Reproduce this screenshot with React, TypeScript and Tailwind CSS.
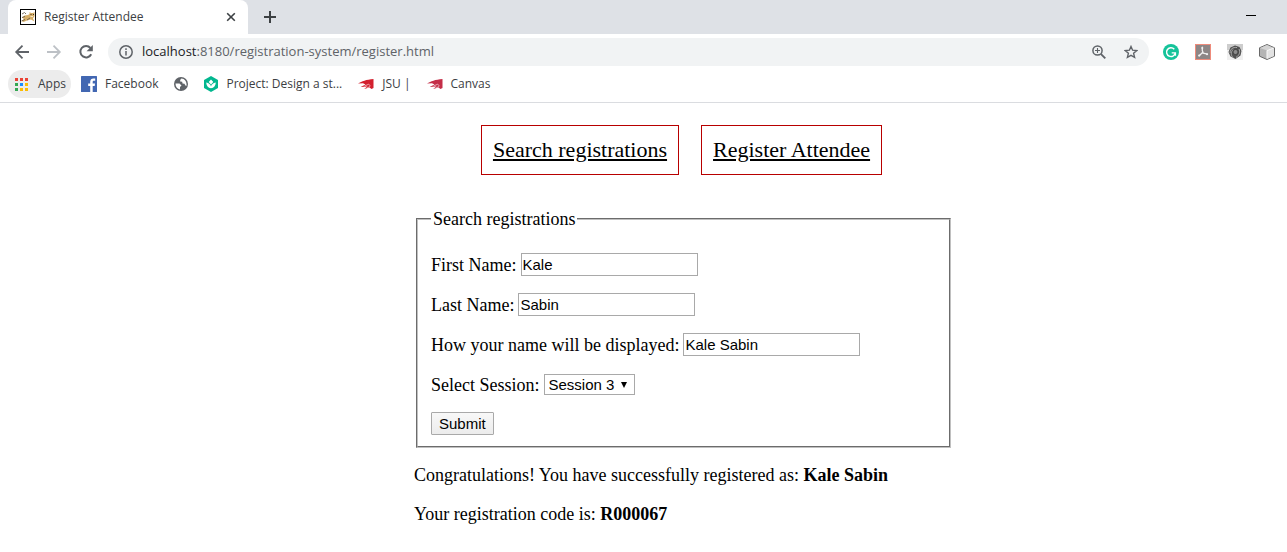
import { useId, type ReactNode } from "react";

const BLUE = "#4267b2";

function CatIcon() {
  return (
    <svg width="16" height="16" viewBox="0 0 16 16" aria-hidden="true">
      <rect x="0.5" y="0.5" width="15" height="15" fill="#fff" stroke="#000" />
      <path d="M1.500 12 4 10 2 8.500 4.500 6.500 8 6 9.500 5 9.500 3 11 4 13 4 14.500 3 14.500 7 13 9.500 14.500 12.500 11 10.500 7 11.500 3.500 13z" fill="#d6ae68" />
      <path d="M2 5 4.500 3.500M4.500 3.500 6 5M2 8.500 5 7.500M1.500 12 5 10.500M7 11 10 9" fill="none" stroke="#5d5140" strokeWidth="0.8" />
      <path d="M10.500 5.500h1M13 5.500h1" stroke="#4b3a21" />
      <path d="M10.500 7h2.500v1h-2.500z" fill="#f6eacb" />
    </svg>
  );
}

function CloseIcon() {
  return (
    <svg width="10" height="10" viewBox="0 0 10 10" aria-hidden="true">
      <path d="M1.200 1.200l7.600 7.600M8.800 1.200 1.200 8.800" stroke="#3c4043" strokeWidth="1.6" />
    </svg>
  );
}

function PlusIcon() {
  return (
    <svg width="12" height="12" viewBox="0 0 12 12" aria-hidden="true">
      <path d="M6 0v12M0 6h12" stroke="#3c4043" strokeWidth="2" />
    </svg>
  );
}

function ArrowIcon() {
  return (
    <svg width="16" height="16" viewBox="0 0 16 16" fill="none" stroke="currentColor" strokeWidth="1.8" aria-hidden="true">
      <path d="M15 8H2.500M8.500 1.700 2.200 8l6.300 6.300" />
    </svg>
  );
}

function ReloadIcon() {
  return (
    <svg width="16" height="16" viewBox="0 0 16 16" aria-hidden="true">
      <path d="M13.200 10.200A5.700 5.700 0 1 1 12.400 4" fill="none" stroke="#5f6368" strokeWidth="2" />
      <path d="M14.800 1v6.200H8.600z" fill="#5f6368" />
    </svg>
  );
}

function InfoIcon() {
  return (
    <svg width="14" height="14" viewBox="0 0 14 14" aria-hidden="true">
      <circle cx="7" cy="7" r="6.2" fill="none" stroke="#5f6368" strokeWidth="1.5" />
      <path d="M7 6v4.500M7 3.300v1.600" stroke="#5f6368" strokeWidth="1.5" />
    </svg>
  );
}

function ZoomIcon() {
  return (
    <svg width="14" height="14" viewBox="0 0 14 14" fill="none" stroke="#5f6368" aria-hidden="true">
      <circle cx="5.5" cy="5.5" r="4.6" strokeWidth="1.5" />
      <path d="M3 5.500h5M5.500 3v5" strokeWidth="1.1" />
      <path d="M8.800 8.800 13.300 13.300" strokeWidth="1.9" />
    </svg>
  );
}

function StarIcon() {
  return (
    <svg width="14" height="14" viewBox="0 0 14 14" aria-hidden="true">
      <path d="M7 1.500 8.600 5.200 12.800 5.600 9.600 8.300 10.600 12.400 7 10.300 3.400 12.400 4.400 8.300 1.200 5.600 5.400 5.200z" fill="none" stroke="#5f6368" strokeWidth="1.4" />
    </svg>
  );
}

function GrammarIcon() {
  return (
    <svg width="16" height="16" viewBox="0 0 16 16" aria-hidden="true">
      <circle cx="8" cy="8" r="8" fill="#15c39a" />
      <path d="M11.300 5.200A4.400 4.400 0 1 0 12.300 9M8.700 8.900h3.700v2.800" fill="none" stroke="#fff" strokeWidth="1.4" />
    </svg>
  );
}

function PdfIcon() {
  return (
    <svg width="16" height="16" viewBox="0 0 16 16" aria-hidden="true">
      <rect x="0.5" y="0.5" width="15" height="15" fill="#8d8686" stroke="#ee8b7b" />
      <path d="M7.300 3.200V6.500L8.200 9M7.800 8.200 4.200 11.800M8 9.200 12.500 10.200" fill="none" stroke="#f1f1f1" strokeWidth="1.3" strokeLinecap="round" />
      <circle cx="4.200" cy="11.500" r="1.100" fill="#f1f1f1" />
      <circle cx="7.300" cy="4" r="1" fill="#f1f1f1" />
      <circle cx="12" cy="10.200" r="1" fill="#f1f1f1" />
    </svg>
  );
}

function KnotIcon() {
  return (
    <svg width="16" height="16" viewBox="0 0 16 16" aria-hidden="true">
      <rect width="16" height="16" fill="#f0f0f0" />
      <path d="M0 0h16v6H0z" fill="#cdcdcd" />
      <path d="M8 1.500 12.500 3 14.500 7 13.500 11.500 8.500 15 3.500 12.500 1.500 8 3.500 3.500z" fill="#505050" />
      <path d="M3 9C3 5 6 3 10 3.500M6 13.500C3.500 11 4 8 6 5.500M12 5c1.500 3 .5 6-3 8.500" fill="none" stroke="#b5b5b5" strokeWidth="0.9" />
      <circle cx="8.500" cy="8" r="2.500" fill="#8b8b8b" stroke="#3a3a3a" strokeWidth="0.8" />
    </svg>
  );
}

function CubeIcon() {
  return (
    <svg width="16" height="16" viewBox="0 0 16 16" aria-hidden="true">
      <path d="M8 .5 15.500 3.800V12.200L8 15.500.5 12.200V3.800z" fill="#b4b4b4" stroke="#696969" />
      <path d="M1 4 8 1l7 3L8 6.600z" fill="#d4d4d4" />
      <path d="M8 6.600 15 4v8L8 15z" fill="#e2e2e2" />
      <path d="M8 6.600v8M8 6.600 14.500 4.200" stroke="#f8f8f8" />
    </svg>
  );
}

function AppsIcon() {
  const colours = ["#ea4335", "#ea4335", "#ea4335", "#34a853", "#1a8cff", "#fbbc04", "#34a853", "#fbbc04", "#fbbc04"];
  return (
    <svg width="13" height="13" viewBox="0 0 13 13" aria-hidden="true">
      {colours.map((fill, i) => (
        <rect key={i} x={(i % 3) * 5} y={Math.floor(i / 3) * 5} width="3" height="3" fill={fill} />
      ))}
    </svg>
  );
}

function FacebookIcon() {
  return (
    <svg width="16" height="16" viewBox="0 0 16 16" aria-hidden="true">
      <rect width="16" height="16" rx="0.5" fill={BLUE} />
      <path d="M9.200 16V10H7.200V7.600h2V5.800c0-2.100 1.300-3.300 3.200-3.300.9 0 1.600.1 1.800.1v2.200H13c-1 0-1.300.5-1.300 1.300v1.500H14L13.700 10h-2v6z" fill="#fff" />
    </svg>
  );
}

function GlobeIcon() {
  return (
    <svg width="14" height="14" viewBox="0 0 14 14" aria-hidden="true">
      <circle cx="7" cy="7" r="7" fill="#5f6368" />
      <path d="M1.500 6.500H5.500L7.500 8.500 6 10v2.400C3.200 12 1.500 9.500 1.500 6.500zM7.500 1.600C6.500 2.500 6 3 6.200 4.500l2 .3L8.500 6.500l2 .3.8 1.700 1.300.2C12.900 4.500 10.500 1.700 7.500 1.600z" fill="#fff" />
    </svg>
  );
}

function LotusIcon() {
  return (
    <svg width="14" height="16" viewBox="0 0 14 16" aria-hidden="true">
      <path d="M7 0 14 4v8l-7 4-7-4V4z" fill="#02b78f" />
      <path d="M7 3.500 9.300 6 7 8.500 4.700 6zM2.200 6.500C5 7 6.500 8.500 7 10.500 7.500 8.500 9 7 11.800 6.500 11.600 10 10 12 7 12.200 4 12 2.400 10 2.200 6.500z" fill="#fff" />
    </svg>
  );
}

function FlameIcon({ colour }: { colour: string }) {
  return (
    <svg width="16" height="10" viewBox="0 0 16 10" aria-hidden="true">
      <path d="M0 4.500C4 2.500 8 .5 15.500 0V9L13.500 10 11.500 8.500 6 10 9.500 7.500 2.500 8 7.500 5.500 5 4.300z" fill={colour} />
      <path d="M6.500 7 10.500 5.300 12.500 6.800M9 9 12 7.500" fill="none" stroke="#fff" strokeWidth="0.6" />
    </svg>
  );
}

function Bookmark({ icon, children, label }: { icon: ReactNode; children?: ReactNode; label?: string }) {
  return (
    <a href="#" aria-label={label} className="flex items-center gap-2 whitespace-nowrap">
      {icon}
      {children}
    </a>
  );
}

function Field({ label, value }: { label: string; value: string }) {
  const id = useId();
  return (
    <div className="flex items-center gap-1">
      <label htmlFor={id}>{label}</label>
      <input
        id={id}
        type="text"
        defaultValue={value}
        className="h-[23px] w-[177px] border border-[#a9a9a9] bg-white px-px font-['Liberation_Sans',Arial,sans-serif] text-[15px] leading-[18px]"
      />
    </div>
  );
}

function NavLink({ children }: { children: ReactNode }) {
  return (
    <a href="#" className="border border-[#b80000] px-[11px] py-3 text-[22px] leading-6 underline decoration-2 underline-offset-2">
      {children}
    </a>
  );
}

function BrowserBar() {
  return (
    <header className="border-b border-[#dadce0] font-['Open_Sans','Segoe_UI',sans-serif] text-xs text-[#3c4043]">
      <div className="flex h-[34px] items-stretch bg-[#dee1e6] pl-2">
        <div className="flex w-60 items-center rounded-t-lg bg-white px-3">
          <CatIcon />
          <span className="ml-2 flex-1">Register Attendee</span>
          <button type="button" aria-label="Close tab">
            <CloseIcon />
          </button>
        </div>
        <button type="button" aria-label="New tab" className="ml-4">
          <PlusIcon />
        </button>
        <button type="button" aria-label="Minimize" className="mr-[31px] mb-1 ml-auto flex items-center">
          <span className="h-px w-2.5 bg-black" />
        </button>
      </div>
      <div className="flex h-9 items-center pr-3 pl-3.5">
        <div className="flex gap-4">
          <button type="button" aria-label="Back" className="text-[#5f6368]">
            <ArrowIcon />
          </button>
          <button type="button" aria-label="Forward" className="rotate-180 text-[#bdc1c6]">
            <ArrowIcon />
          </button>
          <button type="button" aria-label="Reload">
            <ReloadIcon />
          </button>
        </div>
        <div className="ml-3.5 flex h-7 flex-1 items-center rounded-full bg-[#f1f3f4] px-[11px]">
          <InfoIcon />
          <span className="ml-[9px] flex-1 text-[13px] text-[#5f6368]">
            <span className="text-[#202124]">localhost</span>:8180/registration-system/register.html
          </span>
          <button type="button" aria-label="Zoom">
            <ZoomIcon />
          </button>
          <button type="button" aria-label="Bookmark this page" className="ml-[18px]">
            <StarIcon />
          </button>
        </div>
        <div className="ml-3.5 flex gap-4">
          <GrammarIcon />
          <PdfIcon />
          <KnotIcon />
          <CubeIcon />
        </div>
      </div>
      <nav aria-label="Bookmarks" className="flex h-8 items-center pb-1 pl-2">
        <a href="#" className="flex h-7 items-center gap-2.5 rounded-full bg-[#ececec] pr-[5px] pl-[7px]">
          <AppsIcon />
          Apps
        </a>
        <div className="ml-2.5 flex items-center gap-4">
          <Bookmark icon={<FacebookIcon />}>Facebook</Bookmark>
          <Bookmark icon={<GlobeIcon />} label="Web page" />
          <Bookmark icon={<LotusIcon />}>Project: Design a st...</Bookmark>
          <Bookmark icon={<FlameIcon colour="#d3202e" />}>JSU |</Bookmark>
          <Bookmark icon={<FlameIcon colour="#c42e48" />}>Canvas</Bookmark>
        </div>
      </nav>
    </header>
  );
}

export default function App() {
  return (
    <div className="bg-white">
      <BrowserBar />
      <main className="pt-[22px] pl-20 font-['Liberation_Serif','Times_New_Roman',serif] text-lg leading-5 text-black">
        <nav aria-label="Pages" className="flex justify-center gap-[22px] pr-1">
          <NavLink>Search registrations</NavLink>
          <NavLink>Register Attendee</NavLink>
        </nav>
        <div className="mx-auto mt-[34px] max-w-[539px]">
          <form onSubmit={(e) => e.preventDefault()}>
            <fieldset className="mx-0.5 border-2 border-[#c0c0c0] [border-style:groove] px-[13px] pb-[11px]">
              <legend className="px-0.5">Search registrations</legend>
              <div className="flex flex-col items-start gap-[17px] pt-6">
                <Field label="First Name:" value="Kale" />
                <Field label="Last Name:" value="Sabin" />
                <Field label="How your name will be displayed:" value="Kale Sabin" />
                <div className="flex items-center gap-1 pt-px">
                  <label htmlFor="session">Select Session:</label>
                  <span className="grid items-center">
                    <select
                      id="session"
                      defaultValue="3"
                      className="col-start-1 row-start-1 h-[21px] w-[91px] appearance-none border border-[#a9a9a9] bg-white px-1 font-['Liberation_Sans',Arial,sans-serif] text-[15px] leading-[18px]"
                    >
                      <option value="1">Session 1</option>
                      <option value="2">Session 2</option>
                      <option value="3">Session 3</option>
                    </select>
                    <svg width="6" height="6" viewBox="0 0 6 6" aria-hidden="true" className="pointer-events-none col-start-1 row-start-1 mr-2 justify-self-end">
                      <path d="M0 0h6L3 6z" />
                    </svg>
                  </span>
                </div>
                <button
                  type="submit"
                  className="h-[23px] rounded-[1px] border border-[#a9a9a9] bg-gradient-to-b from-[#f8f8f8] to-[#ececec] px-[7px] font-['Liberation_Sans',Arial,sans-serif] text-[15px] leading-[18px]"
                >
                  Submit
                </button>
              </div>
            </fieldset>
          </form>
          <p className="mt-[17px]">
            Congratulations! You have successfully registered as: <b>Kale Sabin</b>
          </p>
          <p className="mt-[19px]">
            Your registration code is: <b>R000067</b>
          </p>
        </div>
      </main>
    </div>
  );
}
